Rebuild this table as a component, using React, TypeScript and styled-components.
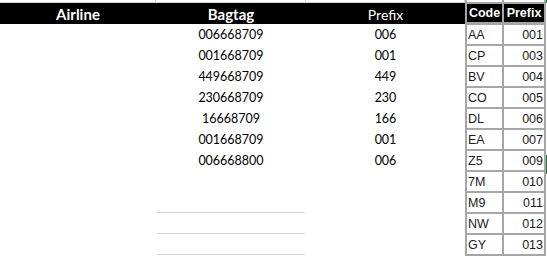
import styled, { createGlobalStyle } from 'styled-components'

const Global = createGlobalStyle`
  html, body { margin: 0; padding: 0; background: #fff; }
  body { width: 547px; height: 256px; overflow: hidden; }
`

const bags = [
  ['006668709', '006'],
  ['001668709', '001'],
  ['449668709', '449'],
  ['230668709', '230'],
  ['16668709', '166'],
  ['001668709', '001'],
  ['006668800', '006'],
  ['', ''],
  ['', ''],
  ['', ''],
  ['', ''],
]

const codes = [
  ['AA', '001'],
  ['CP', '003'],
  ['BV', '004'],
  ['CO', '005'],
  ['DL', '006'],
  ['EA', '007'],
  ['Z5', '009'],
  ['7M', '010'],
  ['M9', '011'],
  ['NW', '012'],
  ['GY', '013'],
]

export default function App() {
  return <Page>
    <Global />
    <Sheet>
      <Strip />
      <Strip />
      <Strip />
      <Head bold>Airline</Head>
      <Head bold>Bagtag</Head>
      <Head>Prefix</Head>
      {bags.map(([tag, prefix], i) => (
        <Row key={i}>
          <Cell />
          <Cell lined={i >= 8}>{tag}</Cell>
          <Cell>{prefix}</Cell>
        </Row>
      ))}
    </Sheet>
    <Lookup>
      <TopCell />
      <TopCell />
      <LookHead>Code</LookHead>
      <LookHead>Prefix</LookHead>
      {codes.map(([code, prefix]) => (
        <Row key={code}>
          <CodeCell>{code}</CodeCell>
          <NumCell>{prefix}</NumCell>
        </Row>
      ))}
    </Lookup>
    <Edge>
      <Mark h={3} green />
      <Mark h={152} />
      <Mark h={19} green />
    </Edge>
  </Page>
}

const Page = styled.div`
  display: flex;
  align-items: flex-start;
  width: 547px;
  height: 256px;
  background: #fff;
`

const Sheet = styled.div`
  width: 465px;
  display: grid;
  grid-template-columns: 156px 150px 159px;
  grid-template-rows: 3px 21px;
  grid-auto-rows: 21px;
  font-family: Lato, 'Liberation Sans', sans-serif;
`

const Row = styled.div`
  display: contents;
`

const Strip = styled.div`
  border-bottom: 1px solid #d4d4d4;
  border-right: 1px solid #d4d4d4;
  box-sizing: border-box;
`

const Head = styled.div<{ bold?: boolean }>`
  background: #000;
  color: #fff;
  display: flex;
  align-items: center;
  justify-content: center;
  font-size: ${p => (p.bold ? '15px' : '14px')};
  font-weight: ${p => (p.bold ? 700 : 400)};
  padding-top: 1px;
`

const Cell = styled.div<{ lined?: boolean }>`
  display: flex;
  align-items: center;
  justify-content: center;
  font-size: 12.5px;
  color: #000;
  margin: 0 1px;
  border-bottom: 1px solid ${p => (p.lined ? '#d4d4d4' : 'transparent')};
`

const Lookup = styled.div`
  width: 81px;
  box-sizing: border-box;
  display: grid;
  grid-template-columns: 35px 40px;
  grid-template-rows: 1px repeat(12, 19px);
  gap: 2px;
  padding: 0 2px 3px;
  background: #a6a6a6;
  font-family: 'Liberation Sans', Arial, sans-serif;
`

const TopCell = styled.div`
  background: #fff;
  height: 2px;
`

const LookHead = styled.div`
  background: #000;
  color: #fff;
  font-weight: 700;
  font-size: 12.5px;
  display: flex;
  align-items: center;
  justify-content: center;
  margin-top: 1px;
`

const CodeCell = styled.div`
  background: #fff;
  color: #1a1a1a;
  font-size: 12.5px;
  display: flex;
  align-items: center;
  padding-left: 1px;
  transform: translateY(1px);
`

const NumCell = styled(CodeCell)`
  justify-content: flex-end;
  padding: 0 1px 0 0;
`

const Edge = styled.div`
  width: 1px;
  display: flex;
  flex-direction: column;
`

const Mark = styled.div<{ h: number; green?: boolean }>`
  height: ${p => p.h}px;
  background: ${p => (p.green ? '#217346' : '#fff')};
`
